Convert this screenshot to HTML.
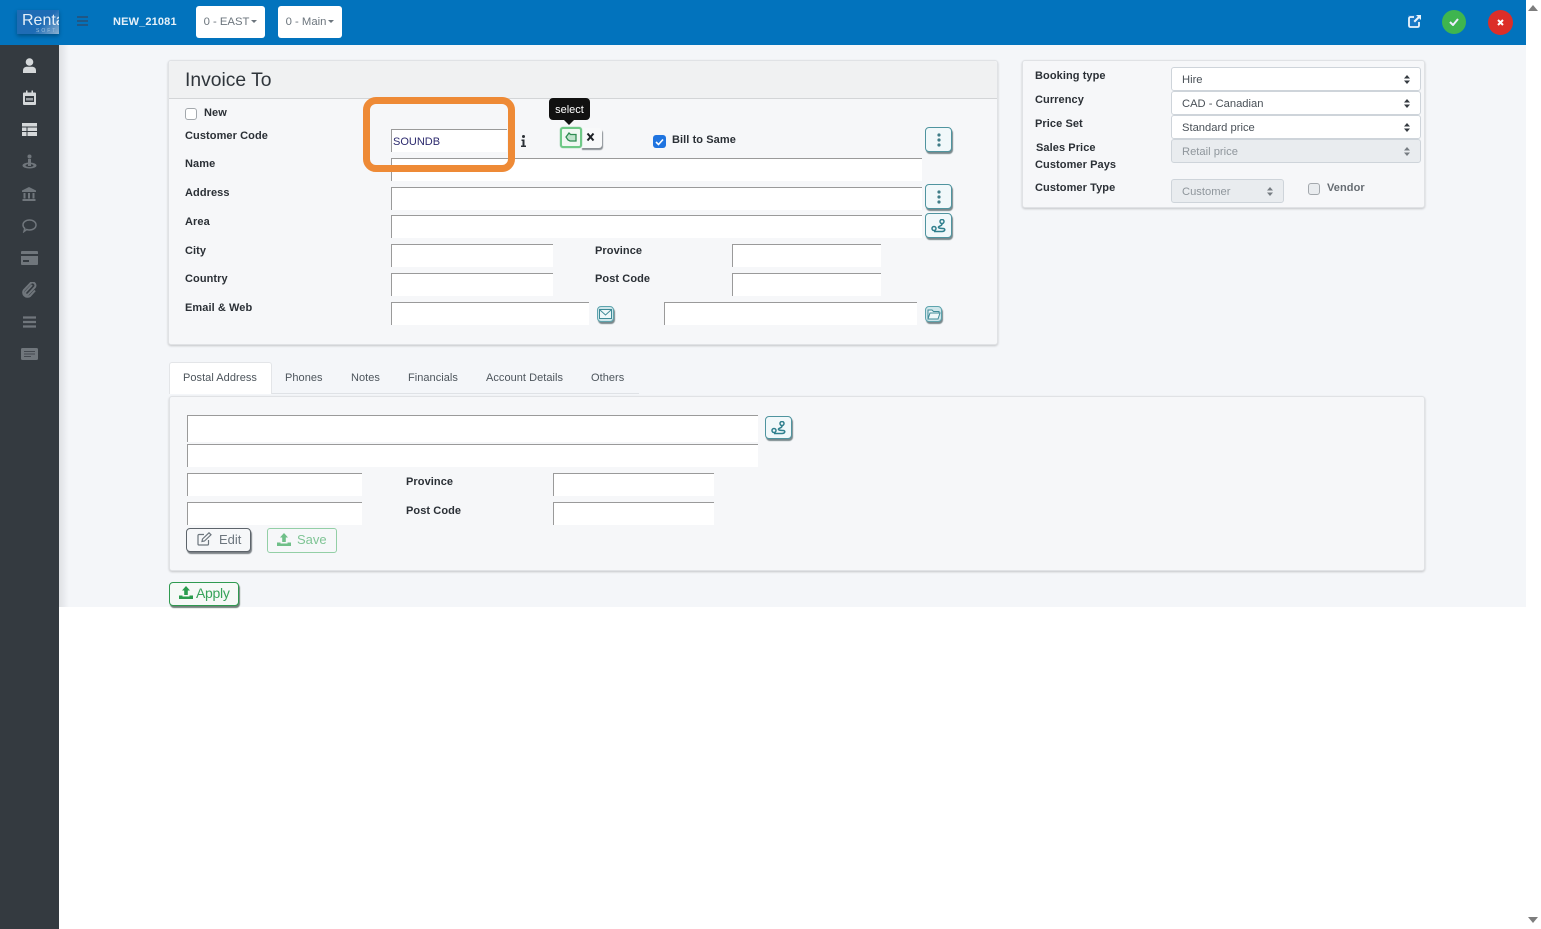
<!DOCTYPE html>
<html><head><meta charset="utf-8"><style>
html,body{margin:0;padding:0;width:1541px;height:929px;overflow:hidden;background:#fff;font-family:"Liberation Sans",sans-serif;color:#212529}
*{box-sizing:border-box}
.a{position:absolute}
.l{position:absolute;font-size:11px;font-weight:700;line-height:14px;margin-top:1px;color:#2b3036;white-space:nowrap;letter-spacing:.08px}
.i{position:absolute;background:#fff;border-top:1px solid #9a9a9a;border-left:1px solid #9a9a9a}
.card{position:absolute;background:#f6f7f9;border:1px solid #e0e2e5;border-radius:3px;box-shadow:0 1px 2px rgba(0,0,0,.2)}
.b{position:absolute;width:27px;height:25px;background:#f1f8fa;border:1px solid #4f949f;border-radius:4px;box-shadow:1px 2px 1px #79888c;display:flex;align-items:center;justify-content:center}
.s{position:absolute;background:#fff;border:1px solid #ced4da;border-radius:3px;font-size:11.2px;line-height:24px;padding-left:10px;color:#495057;height:24px}
.s.d{background:#e9ecef;color:#8f969c}
.s svg{position:absolute;right:10px;top:7px}
.t{position:absolute;top:372px;font-size:11px;line-height:13px;color:#4d555c;white-space:nowrap;letter-spacing:.04px}
.tb{position:absolute;top:6px;height:32px;background:#fff;border-radius:3px;color:#6c757d;font-size:11.3px;line-height:32px;text-align:center}
.tb i{display:inline-block;border-top:3px solid #6c757d;border-left:3px solid transparent;border-right:3px solid transparent;vertical-align:2px;margin-left:2px}
.cb{position:absolute;width:12px;height:12px;background:#fff;border:1px solid #a3a8ad;border-radius:3px}
</style></head><body>
<div class="a" style="left:59px;top:45px;width:1467px;height:562px;background:#f4f6f9"></div>
<div class="a" style="left:59px;top:45px;width:10px;height:562px;background:linear-gradient(90deg,#dfe1e4,#f4f6f9)"></div>
<div class="a" style="left:0;top:0;width:1526px;height:45px;background:#0273bd"></div>
<div class="a" style="left:0;top:45px;width:59px;height:884px;background:#343a40"></div>

<div class="a" style="left:17px;top:10px;width:42px;height:24px;background:linear-gradient(135deg,#1f6cb5 60%,#8fb2d0);overflow:hidden;box-shadow:0 2px 4px rgba(0,0,0,.3)">
<div class="a" style="left:5px;top:2px;font-size:16px;line-height:18px;color:#e3eef8;white-space:nowrap">Rental</div>
<div class="a" style="left:19px;top:18px;font-size:5px;line-height:6px;letter-spacing:2px;color:#9fc3e0;white-space:nowrap">SOFT</div>
</div>
<svg class="a" style="left:77px;top:16px" width="12" height="10"><path d="M0 1h11M0 5h11M0 9h11" stroke="#2a4e73" stroke-width="1.6"/></svg>
<div class="a" style="left:113px;top:15px;font-size:11px;font-weight:700;line-height:14px;color:#e6f1f9;letter-spacing:.15px">NEW_21081</div>
<div class="tb" style="left:196px;width:69px">0 - EAST<i></i></div>
<div class="tb" style="left:278px;width:64px">0 - Main<i></i></div>

<svg class="a" style="left:1408px;top:14px" width="14" height="14" viewBox="0 0 14 14"><rect x="0" y="1" width="12" height="13" fill="#2f7fd0" opacity=".5"/><path d="M6 3H2.500A1.500 1.500 0 0 0 1 4.500v7A1.500 1.500 0 0 0 2.500 13h7a1.500 1.500 0 0 0 1.500-1.500V8" fill="none" stroke="#eaf4fb" stroke-width="1.800"/><path d="M8 1h5v5l-1.800-1.800L7 8.500 5.500 7l4.300-4.300z" fill="#eaf4fb"/></svg>
<div class="a" style="left:1442px;top:10px;width:24px;height:24px;border-radius:50%;background:#3fb54f"></div>
<svg class="a" style="left:1449px;top:18px" width="10" height="8"><path d="M1 4l3 3 5-6" fill="none" stroke="#eef" stroke-width="2"/></svg>
<div class="a" style="left:1488px;top:10px;width:25px;height:25px;border-radius:50%;background:#dc2e28"></div>
<svg class="a" style="left:1497px;top:19px" width="7" height="7"><path d="M1 1l5 5M6 1l-5 5" stroke="#fff" stroke-width="2"/></svg>
<svg class="a" style="left:1528px;top:5px" width="10" height="7"><path d="M0 6h10L5 0z" fill="#7d7d7d"/></svg>
<svg class="a" style="left:1528px;top:917px" width="10" height="6"><path d="M0 0h10L5 6z" fill="#7d7d7d"/></svg>

<!-- sidebar -->
<svg class="a" style="left:22px;top:58px" width="15" height="15" viewBox="0 0 15 15"><circle cx="7.500" cy="4" r="3.800" fill="#d5d8da"/><path d="M1 15v-2.500C1 10 3 8.800 5 8.800h5c2 0 4 1.200 4 3.700V15z" fill="#d5d8da"/></svg>
<svg class="a" style="left:23px;top:90px" width="13" height="15" viewBox="0 0 13 15"><path d="M0 3.500a1 1 0 0 1 1-1h2V.5h1.500v2h4V.5H10v2h2a1 1 0 0 1 1 1V14a1 1 0 0 1-1 1H1a1 1 0 0 1-1-1z" fill="#d5d8da"/><rect x="2" y="6" width="9" height="6" fill="#343a40"/><path d="M3 8h7v2.500H3z" fill="#9a9fa3"/></svg>
<svg class="a" style="left:22px;top:123px" width="15" height="13" viewBox="0 0 15 13"><path d="M0 0h15v13H0z" fill="#d5d8da"/><path d="M0 4h15M0 8.500h15M5 4v9" stroke="#343a40" stroke-width="1"/></svg>
<svg class="a" style="left:22px;top:154px" width="15" height="15" viewBox="0 0 15 15" fill="#70767c"><circle cx="7.500" cy="2.500" r="2"/><path d="M6 5h3v6H6z"/><ellipse cx="7.500" cy="11.500" rx="7" ry="3"/><ellipse cx="7.500" cy="11.500" rx="4" ry="1.500" fill="#343a40"/><rect x="6" y="9" width="3" height="3"/></svg>
<svg class="a" style="left:22px;top:187px" width="14" height="14" viewBox="0 0 14 14" fill="#70767c"><path d="M7 0l7 3.500V5H0V3.500z"/><path d="M1.500 6h2v5.500h-2zM6 6h2v5.500H6zM10.500 6h2v5.500h-2zM.5 12h13v2H.5z"/></svg>
<svg class="a" style="left:22px;top:219px" width="15" height="14" viewBox="0 0 15 14"><path d="M7.500 1C11 1 14 3 14 6s-3 5-6.500 5c-1 0-2-.2-2.800-.5L2 12.500l.8-3C1.600 8.500 1 7.300 1 6c0-3 3-5 6.500-5z" fill="none" stroke="#70767c" stroke-width="1.500"/></svg>
<svg class="a" style="left:21px;top:251px" width="17" height="14" viewBox="0 0 17 14" fill="#70767c"><path d="M0 1a1 1 0 0 1 1-1h15a1 1 0 0 1 1 1v2H0zM0 5h17v8a1 1 0 0 1-1 1H1a1 1 0 0 1-1-1z"/><rect x="2" y="9" width="6" height="2" fill="#343a40"/></svg>
<svg class="a" style="left:22px;top:282px" width="15" height="16" viewBox="0 0 15 16"><path d="M10 3L3.500 10a1.800 1.800 0 0 0 2.500 2.500l7-7.500a3 3 0 0 0-4.300-4L2 8a4.300 4.300 0 0 0 6 6l5-5.500" fill="none" stroke="#70767c" stroke-width="2"/></svg>
<svg class="a" style="left:23px;top:316px" width="13" height="12"><path d="M0 1.500h13M0 6h13M0 10.500h13" stroke="#70767c" stroke-width="2.200"/></svg>
<svg class="a" style="left:21px;top:348px" width="17" height="12" viewBox="0 0 17 12"><rect width="17" height="12" rx="1.500" fill="#70767c"/><path d="M3 3.500h11M3 6h11M3 8.500h7" stroke="#343a40" stroke-width=".8"/></svg>

<!-- invoice card -->
<div class="card" style="left:168px;top:60px;width:830px;height:285px"></div>
<div class="a" style="left:169px;top:61px;width:828px;height:38px;background:#f0f1f2;border-bottom:1px solid #d3d5d7;border-radius:3px 3px 0 0"></div>
<div class="a" style="left:185px;top:69px;font-size:19.300px;line-height:24px;color:#2f353b">Invoice To</div>

<div class="cb" style="left:185px;top:108px"></div>
<div class="l" style="left:204px;top:105px">New</div>
<div class="l" style="left:185px;top:128px">Customer Code</div>
<div class="l" style="left:185px;top:156px">Name</div>
<div class="l" style="left:185px;top:185px">Address</div>
<div class="l" style="left:185px;top:214px">Area</div>
<div class="l" style="left:185px;top:243px">City</div>
<div class="l" style="left:185px;top:271px">Country</div>
<div class="l" style="left:185px;top:300px">Email &amp; Web</div>
<div class="l" style="left:595px;top:243px">Province</div>
<div class="l" style="left:595px;top:271px">Post Code</div>

<div class="i" style="left:391px;top:129px;width:116px;height:23px;padding:1px 0 0 1px;font-size:11px;line-height:23px;color:#2c2a6e">SOUNDB</div>
<div class="i" style="left:391px;top:158px;width:531px;height:23px;border-left:1px solid #9a9a9a"></div>
<div class="i" style="left:391px;top:187px;width:531px;height:23px"></div>
<div class="i" style="left:391px;top:215px;width:531px;height:23px"></div>
<div class="i" style="left:391px;top:244px;width:162px;height:23px"></div>
<div class="i" style="left:391px;top:273px;width:162px;height:23px"></div>
<div class="i" style="left:732px;top:244px;width:149px;height:23px"></div>
<div class="i" style="left:732px;top:273px;width:149px;height:23px"></div>
<div class="i" style="left:391px;top:302px;width:198px;height:23px"></div>
<div class="i" style="left:664px;top:302px;width:253px;height:23px"></div>

<svg class="a" style="left:521px;top:135px" width="5" height="12" viewBox="0 0 5 12" fill="#2b3036"><circle cx="2.500" cy="1.500" r="1.500"/><path d="M.5 4.500h3V10.500H5V12H0v-1.500h1.500v-4.500H.5z"/></svg>

<!-- select / close buttons -->
<div class="a" style="left:549px;top:98px;width:41px;height:22px;background:#111;border-radius:4px;color:#fff;font-size:11px;line-height:24px;text-align:center">select</div>
<div class="a" style="left:564px;top:120px;border-top:5px solid #111;border-left:5px solid transparent;border-right:5px solid transparent"></div>
<div class="a" style="left:581px;top:128px;width:21px;height:20px;background:#f8f9fa;border-radius:0 3px 3px 0;box-shadow:1px 2px 1px #8a8f94"></div>
<svg class="a" style="left:586px;top:132px" width="9" height="10"><path d="M1.500 1.500l6 7M7.500 1.500l-6 7" stroke="#1d2126" stroke-width="2"/></svg>
<div class="a" style="left:560px;top:127px;width:22px;height:21px;background:#f1f8f3;border:2px solid #6fc987;border-radius:3px;box-shadow:0 0 1px #55b06e"></div>
<svg class="a" style="left:565px;top:132px" width="12" height="11" viewBox="0 0 12 11"><path d="M1 5l3-4 1.500 1.500H11V9H5L3 8z" fill="#bfe3cb" stroke="#2f8c52" stroke-width="1.300"/></svg>

<!-- orange highlight -->
<div class="a" style="left:363px;top:97px;width:152px;height:75px;border:7px solid #ee8a36;border-radius:13px"></div>

<div class="a" style="left:653px;top:135px;width:13px;height:13px;background:#1f74e0;border-radius:3px"></div>
<svg class="a" style="left:655px;top:138px" width="9" height="8"><path d="M1 4l2.500 2.500L8 1.500" fill="none" stroke="#fff" stroke-width="1.600"/></svg>
<div class="l" style="left:672px;top:132px">Bill to Same</div>

<div class="b" style="left:925px;top:127px"><svg width="4" height="14"><circle cx="2" cy="2" r="1.600" fill="#3f7d88"/><circle cx="2" cy="7" r="1.600" fill="#3f7d88"/><circle cx="2" cy="12" r="1.600" fill="#3f7d88"/></svg></div>
<div class="b" style="left:925px;top:184px"><svg width="4" height="14"><circle cx="2" cy="2" r="1.600" fill="#3f7d88"/><circle cx="2" cy="7" r="1.600" fill="#3f7d88"/><circle cx="2" cy="12" r="1.600" fill="#3f7d88"/></svg></div>
<div class="b" style="left:925px;top:213px"><svg width="16" height="14" viewBox="0 0 16 14"><circle cx="3" cy="9.500" r="2" fill="none" stroke="#2f7f8d" stroke-width="1.500"/><circle cx="11" cy="2.500" r="2" fill="none" stroke="#2f7f8d" stroke-width="1.500"/><path d="M11 5c0 2-3 2-3.500 3S9 9.500 12 9.500s2 3-1 3H3" fill="none" stroke="#2f7f8d" stroke-width="1.500"/></svg></div>
<div class="b" style="left:597px;top:306px;width:17px;height:16px;background:#cfe6ea;border-color:#5ea4ae"><svg width="13" height="10"><rect x=".5" y=".5" width="12" height="9" fill="#eef7f9" stroke="#3f8b98"/><path d="M1 1l5.500 5L12 1" fill="none" stroke="#3f8b98"/></svg></div>
<div class="b" style="left:925px;top:306px;width:17px;height:16px;background:#cfe6ea;border-color:#5ea4ae"><svg width="14" height="11" viewBox="0 0 14 11"><path d="M1 10V1h4l1.500 1.500H12V4M1 10l2-6h10l-2 6z" fill="#eef7f9" stroke="#3f8b98"/></svg></div>

<!-- right card -->
<div class="card" style="left:1022px;top:60px;width:403px;height:148px"></div>
<div class="l" style="left:1035px;top:68px">Booking type</div>
<div class="l" style="left:1035px;top:92px">Currency</div>
<div class="l" style="left:1035px;top:116px">Price Set</div>
<div class="l" style="left:1036px;top:140px">Sales Price</div>
<div class="l" style="left:1035px;top:157px">Customer Pays</div>
<div class="l" style="left:1035px;top:180px">Customer Type</div>
<div class="s" style="left:1171px;top:67px;width:250px">Hire<svg width="6" height="9"><path d="M0 3.500L3 0l3 3.500zM0 5.500L3 9l3-3.500z" fill="#343a40"/></svg></div>
<div class="s" style="left:1171px;top:91px;width:250px">CAD - Canadian<svg width="6" height="9"><path d="M0 3.500L3 0l3 3.500zM0 5.500L3 9l3-3.500z" fill="#343a40"/></svg></div>
<div class="s" style="left:1171px;top:115px;width:250px">Standard price<svg width="6" height="9"><path d="M0 3.500L3 0l3 3.500zM0 5.500L3 9l3-3.500z" fill="#343a40"/></svg></div>
<div class="s d" style="left:1171px;top:139px;width:250px">Retail price<svg width="6" height="9"><path d="M0 3.500L3 0l3 3.500zM0 5.500L3 9l3-3.500z" fill="#767c82"/></svg></div>
<div class="s d" style="left:1171px;top:179px;width:113px">Customer<svg width="6" height="9"><path d="M0 3.500L3 0l3 3.500zM0 5.500L3 9l3-3.500z" fill="#767c82"/></svg></div>
<div class="cb" style="left:1308px;top:183px;background:#e9ecef"></div>
<div class="l" style="left:1327px;top:180px;color:#666c72">Vendor</div>

<!-- tabs -->
<div class="a" style="left:169px;top:393px;width:470px;height:1px;background:#dfe2e6"></div>
<div class="a" style="left:169px;top:362px;width:103px;height:32px;background:#fff;border:1px solid #e3e5e8;border-bottom:0;border-radius:3px 3px 0 0"></div>
<div class="t" style="left:183px">Postal Address</div>
<div class="t" style="left:285px">Phones</div>
<div class="t" style="left:351px">Notes</div>
<div class="t" style="left:408px">Financials</div>
<div class="t" style="left:486px">Account Details</div>
<div class="t" style="left:591px">Others</div>

<div class="card" style="left:169px;top:396px;width:1256px;height:175px"></div>
<div class="i" style="left:187px;top:415px;width:571px;height:27px"></div>
<div class="i" style="left:187px;top:444px;width:571px;height:23px"></div>
<div class="i" style="left:187px;top:473px;width:175px;height:23px"></div>
<div class="i" style="left:187px;top:502px;width:175px;height:23px"></div>
<div class="i" style="left:553px;top:473px;width:161px;height:23px"></div>
<div class="i" style="left:553px;top:502px;width:161px;height:23px"></div>
<div class="l" style="left:406px;top:474px">Province</div>
<div class="l" style="left:406px;top:503px">Post Code</div>
<div class="b" style="left:765px;top:416px;height:23px"><svg width="16" height="14" viewBox="0 0 16 14"><circle cx="3" cy="9.500" r="2" fill="none" stroke="#2f7f8d" stroke-width="1.500"/><circle cx="11" cy="2.500" r="2" fill="none" stroke="#2f7f8d" stroke-width="1.500"/><path d="M11 5c0 2-3 2-3.500 3S9 9.500 12 9.500s2 3-1 3H3" fill="none" stroke="#2f7f8d" stroke-width="1.500"/></svg></div>

<div class="a" style="left:186px;top:528px;width:65px;height:24px;background:#f6f7f9;border:1px solid #5d646b;border-radius:4px;box-shadow:1px 2px 1px #7c8186"></div>
<svg class="a" style="left:197px;top:532px" width="15" height="14" viewBox="0 0 15 14"><path d="M7 2.500H2a1 1 0 0 0-1 1V12a1 1 0 0 0 1 1h8.500a1 1 0 0 0 1-1V8" fill="none" stroke="#6c757d" stroke-width="1.200"/><path d="M5 9.500l.5-2.500L12 .8l2 2L7.500 9z" fill="none" stroke="#6c757d" stroke-width="1.200"/></svg>
<div class="a" style="left:219px;top:531px;font-size:13px;line-height:17px;color:#6c757d">Edit</div>

<div class="a" style="left:267px;top:528px;width:70px;height:25px;border:1px solid #93cfa6;border-radius:3px"></div>
<svg class="a" style="left:277px;top:533px" width="14" height="13" viewBox="0 0 14 13"><path d="M7 0l4 4.500H8.800V9H5.200V4.500H3zM0 9.500h3.500v1h7v-1H14V13H0z" fill="#6fbf88"/></svg>
<div class="a" style="left:297px;top:531px;font-size:13px;line-height:17px;color:#7fc495">Save</div>

<div class="a" style="left:169px;top:582px;width:70px;height:24px;background:#f6f9f7;border:1px solid #2f9a50;border-radius:4px;box-shadow:1px 2px 1px #71807a"></div>
<svg class="a" style="left:179px;top:586px" width="14" height="13" viewBox="0 0 14 13"><path d="M7 0l4 4.500H8.800V9H5.200V4.500H3zM0 9.500h3.500v1h7v-1H14V13H0z" fill="#2a9c4e"/></svg>
<div class="a" style="left:196px;top:585px;font-size:14px;line-height:17px;letter-spacing:-.3px;color:#37a35a">Apply</div>
</body></html>
